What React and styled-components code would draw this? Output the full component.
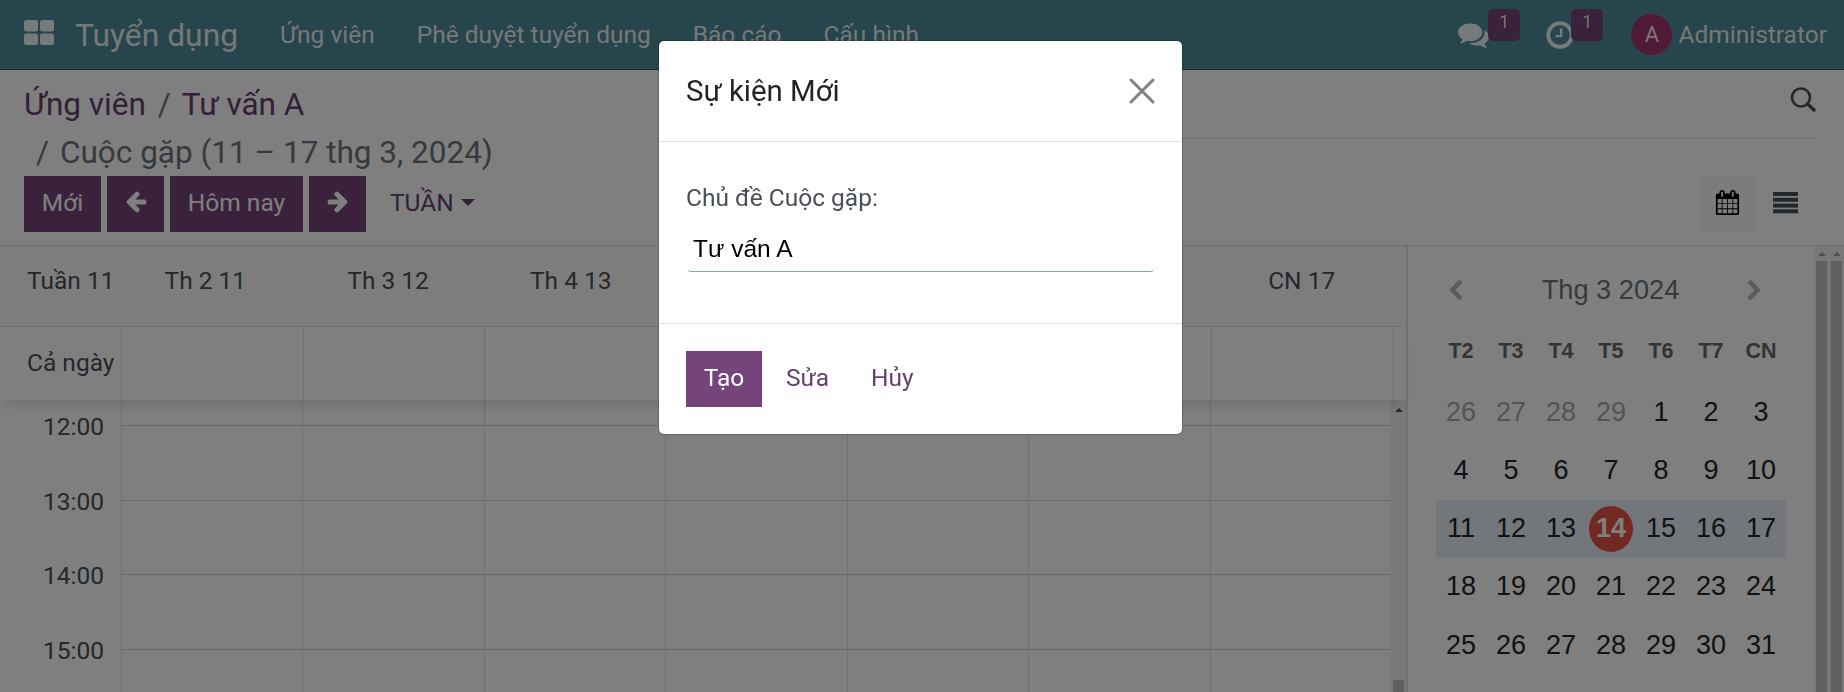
import styled, { createGlobalStyle, css } from 'styled-components';

const COLORS = {
  Navbar: '#4f8a9a',
  NavbarBorder: '#33555e',
  Primary: '#75447b',
  PrimaryDark: '#66406d',
  Muted: '#6c757d',
  Text: '#495057',
  Border: '#dee2e6',
  Today: '#e55345',
  WeekHighlight: '#e6eef9',
};

const WEEK_DAYS = ['Th 2 11', 'Th 3 12', 'Th 4 13', 'Th 5 14', 'Th 6 15', 'Th 7 16', 'CN 17'];
const HOURS = ['12:00', '13:00', '14:00', '15:00'];
const MONTH_DAYS = ['T2', 'T3', 'T4', 'T5', 'T6', 'T7', 'CN'];
const MONTH = [
  [26, 27, 28, 29, 1, 2, 3],
  [4, 5, 6, 7, 8, 9, 10],
  [11, 12, 13, 14, 15, 16, 17],
  [18, 19, 20, 21, 22, 23, 24],
  [25, 26, 27, 28, 29, 30, 31],
];

function AppsIcon() {
  return (
    <svg width="30" height="25" viewBox="0 0 30 25" fill="currentColor">
      <rect width="14" height="11.5" rx="2.5" />
      <rect x="16" width="14" height="11.5" rx="2.5" />
      <rect y="13.5" width="14" height="11.5" rx="2.5" />
      <rect x="16" y="13.5" width="14" height="11.5" rx="2.5" />
    </svg>
  );
}

function CommentsIcon() {
  return (
    <svg width="31" height="31" viewBox="0 0 1792 1792" fill="currentColor">
      <path d="M1408 768q0 139-94 257t-256.5 186.5-353.5 68.5q-86 0-176-16-124 88-278 128-36 9-86 16h-3q-11 0-20.5-8t-11.5-21q-1-3-1-6.5t.5-6.5 2-6l2.5-5 3.5-5.5 4-5 4.5-5 4-4.5q5-6 23-25t26-29.5 22.5-29 25-38.5 20.5-44q-124-72-195-177t-71-224q0-139 94-257t256.5-186.5 353.5-68.5 353.5 68.5 256.5 186.5 94 257zm384 256q0 120-71 224.5t-195 176.5q10 24 20.5 44t25 38.5 22.5 29 26 29.5 23 25q1 1 4 4.5t4.5 5 4 5 3.5 5.5l2.5 5 2 6 .5 6.5-1 6.5q-3 14-13 22t-22 7q-50-7-86-16-154-40-278-128-90 16-176 16-271 0-472-132 58 4 88 4 161 0 309-45t264-129q125-92 192-212t67-254q0-77-23-152 129 71 204 178t75 230z" />
    </svg>
  );
}

function ClockIcon() {
  return (
    <svg width="32" height="32" viewBox="0 0 1792 1792" fill="currentColor">
      <path d="M1024 544v448q0 14-9 23t-23 9h-320q-14 0-23-9t-9-23v-64q0-14 9-23t23-9h224v-352q0-14 9-23t23-9h64q14 0 23 9t9 23zm416 352q0-148-73-273t-198-198-273-73-273 73-198 198-73 273 73 273 198 198 273 73 273-73 198-198 73-273zm224 0q0 209-103 385.5t-279.5 279.5-385.5 103-385.5-103-279.5-279.5-103-385.5 103-385.5 279.5-279.5 385.5-103 385.5 103 279.5 279.5 103 385.5z" />
    </svg>
  );
}

function ArrowIcon({ flip }) {
  return (
    <svg width="24" height="24" viewBox="0 0 1792 1792" fill="currentColor">
      <path
        transform={flip ? 'translate(1792 -64) scale(-1 1)' : 'translate(0 -64)'}
        d="M1664 896v128q0 53-32.5 90.5t-84.5 37.5h-704l293 294q38 36 38 90t-38 90l-75 76q-37 37-90 37-52 0-91-37l-651-652q-37-37-37-90 0-52 37-91l651-650q38-38 91-38 52 0 90 38l75 74q38 38 38 91t-38 91l-293 293h704q52 0 84.5 37.5t32.5 90.5z"
      />
    </svg>
  );
}

function SearchIcon() {
  return (
    <svg width="26" height="26" viewBox="0 0 26 26" fill="none" stroke="currentColor">
      <circle cx="11" cy="10.5" r="9" strokeWidth="2.6" />
      <path d="M17.5 17l6.5 6" strokeWidth="3.4" strokeLinecap="round" />
    </svg>
  );
}

function CalendarIcon() {
  return (
    <svg width="25" height="25" viewBox="0 0 1792 1792" fill="currentColor">
      <path d="M192 1664h288v-288h-288v288zm352 0h320v-288h-320v288zm-352-352h288v-320h-288v320zm352 0h320v-320h-320v320zm-352-384h288v-288h-288v288zm736 736h320v-288h-320v288zm-384-736h320v-288h-320v288zm768 736h288v-288h-288v288zm-384-352h320v-320h-320v320zm-352-864v-288q0-13-9.5-22.5t-22.5-9.5h-64q-13 0-22.5 9.5t-9.5 22.5v288q0 13 9.5 22.5t22.5 9.5h64q13 0 22.5-9.5t9.5-22.5zm736 864h288v-320h-288v320zm-384-384h320v-288h-320v288zm384 0h288v-288h-288v288zm32-480v-288q0-13-9.5-22.5t-22.5-9.5h-64q-13 0-22.5 9.5t-9.5 22.5v288q0 13 9.5 22.5t22.5 9.5h64q13 0 22.5-9.5t9.5-22.5zm384-64v1280q0 52-38 90t-90 38h-1408q-52 0-90-38t-38-90v-1280q0-52 38-90t90-38h128v-96q0-66 47-113t113-47h64q66 0 113 47t47 113v96h384v-96q0-66 47-113t113-47h64q66 0 113 47t47 113v96h128q52 0 90 38t38 90z" />
    </svg>
  );
}

function ListIcon() {
  return (
    <svg width="25" height="22" viewBox="0 0 25 22" fill="currentColor">
      <rect width="25" height="4" y="0" />
      <rect width="25" height="4" y="5.8" />
      <rect width="25" height="4" y="11.6" />
      <rect width="25" height="4" y="17.3" />
    </svg>
  );
}

function ChevronIcon({ flip }) {
  return (
    <svg width="14" height="22" viewBox="0 0 14 22" fill="none" stroke="currentColor" strokeWidth="4.6">
      <path d={flip ? 'M2 2l8.5 9L2 20' : 'M12 2L3.5 11 12 20'} />
    </svg>
  );
}

function CloseIcon() {
  return (
    <svg width="26" height="26" viewBox="0 0 26 26" stroke="currentColor" strokeWidth="3" strokeLinecap="round">
      <path d="M2 2l22 22M24 2L2 24" />
    </svg>
  );
}

function Navbar() {
  return (
    <NavbarWrapper>
      <AppsIcon />
      <Brand>Tuyển dụng</Brand>
      <Menu>
        <span>Ứng viên</span>
        <span>Phê duyệt tuyển dụng</span>
        <span>Báo cáo</span>
        <span>Cấu hình</span>
      </Menu>
      <Systray>
        <SystrayItem $width={86}>
          <CommentsIcon />
          <Badge $left={30}>1</Badge>
        </SystrayItem>
        <SystrayItem $width={87}>
          <ClockIcon />
          <Badge $left={27}>1</Badge>
        </SystrayItem>
        <Avatar>A</Avatar>
        Administrator
      </Systray>
    </NavbarWrapper>
  );
}

function ControlPanel() {
  return (
    <ControlWrapper>
      <ControlLeft>
        <Breadcrumb>
          <div>
            <a>Ứng viên</a>
            <Slash>/</Slash>
            <a>Tư vấn A</a>
          </div>
          <CurrentCrumb>
            <Slash>/</Slash>
            Cuộc gặp (11 – 17 thg 3, 2024)
          </CurrentCrumb>
        </Breadcrumb>
        <ButtonRow>
          <Button $width={77}>Mới</Button>
          <Button $width={57}>
            <ArrowIcon />
          </Button>
          <Button $width={133}>Hôm nay</Button>
          <Button $width={57}>
            <ArrowIcon flip />
          </Button>
          <ScaleButton>
            TUẦN
            <Caret />
          </ScaleButton>
        </ButtonRow>
      </ControlLeft>
      <ControlRight>
        <SearchRow>
          <SearchIcon />
        </SearchRow>
        <ViewSwitcher>
          <ViewButton $active>
            <CalendarIcon />
          </ViewButton>
          <ViewButton>
            <ListIcon />
          </ViewButton>
        </ViewSwitcher>
      </ControlRight>
    </ControlWrapper>
  );
}

function WeekCalendar() {
  return (
    <Week>
      <WeekHeader>
        <WeekNumber>Tuần 11</WeekNumber>
        {WEEK_DAYS.map((day) => (
          <DayName key={day}>{day}</DayName>
        ))}
      </WeekHeader>
      <AllDayRow>
        <AllDayLabel>Cả ngày</AllDayLabel>
        {WEEK_DAYS.map((day) => (
          <AllDayCell key={day} />
        ))}
      </AllDayRow>
      <Scroller>
        <Slots>
          <SlotRow $short>
            <HourLabel />
            {WEEK_DAYS.map((day) => (
              <SlotCell key={day} />
            ))}
          </SlotRow>
          {HOURS.map((hour) => (
            <SlotRow key={hour}>
              <HourLabel>{hour}</HourLabel>
              {WEEK_DAYS.map((day) => (
                <SlotCell key={day} $line />
              ))}
            </SlotRow>
          ))}
        </Slots>
        <Scrollbar $inner>
          <ScrollArrow $dark />
          <ScrollThumb $gap={268} />
        </Scrollbar>
      </Scroller>
    </Week>
  );
}

function MonthPicker() {
  return (
    <Sidebar>
      <MonthHeader>
        <ChevronIcon />
        <span>Thg 3 2024</span>
        <ChevronIcon flip />
      </MonthHeader>
      <MonthRow $head>
        {MONTH_DAYS.map((day) => (
          <div key={day}>{day}</div>
        ))}
      </MonthRow>
      {MONTH.map((week, row) => (
        <MonthRow key={row} $current={row === 2}>
          {week.map((day) => (
            <MonthDay key={day} $outside={row === 0 && day > 7}>
              {day === 14 ? <Today>{day}</Today> : day}
            </MonthDay>
          ))}
        </MonthRow>
      ))}
    </Sidebar>
  );
}

function EventDialog() {
  return (
    <Backdrop>
      <Dialog role="dialog" aria-label="Sự kiện Mới">
        <DialogHeader>
          <DialogTitle>Sự kiện Mới</DialogTitle>
          <CloseIcon />
        </DialogHeader>
        <DialogBody>
          <label htmlFor="title">Chủ đề Cuộc gặp:</label>
          <TitleInput id="title" defaultValue="Tư vấn A" spellCheck={false} />
        </DialogBody>
        <DialogFooter>
          <Button $width={76}>Tạo</Button>
          <LinkButton>Sửa</LinkButton>
          <LinkButton>Hủy</LinkButton>
        </DialogFooter>
      </Dialog>
    </Backdrop>
  );
}

function App() {
  return (
    <Page>
      <GlobalStyle />
      <Navbar />
      <ControlPanel />
      <Content>
        <WeekCalendar />
        <MonthPicker />
        <Scrollbar>
          <ScrollArrow />
          <ScrollThumb />
        </Scrollbar>
        <Scrollbar>
          <ScrollArrow />
          <ScrollThumb />
        </Scrollbar>
      </Content>
      <EventDialog />
    </Page>
  );
}

const GlobalStyle = createGlobalStyle`
  *, *::before, *::after {
    box-sizing: border-box;
  }

  body {
    margin: 0;
    font-family: Roboto, 'Liberation Sans', sans-serif;
    font-size: 24.5px;
    color: ${COLORS.Text};
  }

  svg {
    display: block;
    flex-shrink: 0;
  }
`;

const Page = styled.div`
  display: flex;
  flex-direction: column;
  height: 692px;
  overflow: hidden;
  background: white;
`;

const NavbarWrapper = styled.header`
  display: flex;
  align-items: center;
  flex-shrink: 0;
  height: 70px;
  padding: 0 17px 4px 24px;
  color: rgba(255, 255, 255, 0.9);
  background: ${COLORS.Navbar};
  border-bottom: 1px solid ${COLORS.NavbarBorder};
`;

const Brand = styled.div`
  width: 205px;
  padding: 4px 0 0 21px;
  font-size: 31.8px;
  line-height: 48px;
`;

const Menu = styled.nav`
  display: flex;
  gap: 42px;
  padding: 4px 0 0 21px;
`;

const Systray = styled.div`
  display: flex;
  align-items: center;
  margin-left: auto;
  padding-top: 4px;
`;

const SystrayItem = styled.div`
  position: relative;
  width: ${(props) => props.$width}px;
`;

const Badge = styled.span`
  position: absolute;
  top: -10px;
  left: ${(props) => props.$left}px;
  width: 32px;
  height: 32px;
  font-size: 18px;
  line-height: 25px;
  text-align: center;
  text-shadow: 1px 1px 0 rgba(0, 0, 0, 0.3);
  background: ${COLORS.Primary};
  border-radius: 5px;
`;

const Avatar = styled.div`
  width: 41px;
  height: 41px;
  margin-right: 6px;
  font-size: 22px;
  line-height: 42px;
  text-align: center;
  background: #a2376f;
  border-radius: 50%;
`;

const ControlWrapper = styled.div`
  display: flex;
  flex-shrink: 0;
  height: 176px;
  padding: 11px 28px 0 24px;
  border-bottom: 1px solid ${COLORS.Border};
`;

const ControlLeft = styled.div`
  width: 882px;
`;

const Breadcrumb = styled.div`
  height: 95px;
  font-size: 31.5px;
  line-height: 48px;
  color: ${COLORS.PrimaryDark};
`;

const CurrentCrumb = styled.div`
  color: ${COLORS.Muted};
`;

const Slash = styled.span`
  padding: 0 11px 0 12px;
  color: ${COLORS.Muted};
`;

const ButtonRow = styled.div`
  display: flex;
  gap: 6px;
`;

const Button = styled.button`
  display: flex;
  align-items: center;
  justify-content: center;
  width: ${(props) => props.$width}px;
  height: 56px;
  padding: 0 0 4px;
  font: inherit;
  color: white;
  background: ${COLORS.Primary};
  border: none;
`;

const ScaleButton = styled(Button)`
  gap: 7px;
  padding-left: 18px;
  color: ${COLORS.PrimaryDark};
  background: none;
`;

const Caret = styled.span`
  border: 7px solid transparent;
  border-top-color: currentColor;
  border-bottom: none;
`;

const ControlRight = styled.div`
  display: flex;
  flex: 1;
  flex-direction: column;
`;

const SearchRow = styled.div`
  display: flex;
  justify-content: flex-end;
  height: 58px;
  padding-top: 6px;
  border-bottom: 1px solid ${COLORS.Border};
`;

const ViewSwitcher = styled.div`
  display: flex;
  justify-content: flex-end;
  padding-top: 37px;
`;

const ViewButton = styled.div`
  display: flex;
  align-items: center;
  justify-content: center;
  width: 59px;
  height: 56px;
  padding: 0 2px 3px 0;

  ${(props) =>
    props.$active &&
    css`
      padding-right: 1px;
      color: black;
      background: #f8f9fa;
    `}
`;

const Content = styled.main`
  display: flex;
  flex: 1;
  min-height: 0;
`;

const Week = styled.section`
  display: flex;
  flex-direction: column;
  width: 1408px;
  border-right: 2px solid ${COLORS.Border};
`;

const WeekHeader = styled.div`
  display: flex;
  flex-shrink: 0;
  height: 81px;
  padding-right: 13px;
  line-height: 70px;
  white-space: nowrap;
  color: ${COLORS.Text};
  background: #fbfbfc;
  border-bottom: 1px solid ${COLORS.Border};
`;

const WeekNumber = styled.div`
  flex-shrink: 0;
  width: 114px;
  padding-left: 27px;
`;

const DayName = styled.div`
  flex: 1;
  text-align: center;
`;

const AllDayRow = styled.div`
  display: flex;
  flex-shrink: 0;
  z-index: 1;
  height: 73px;
  padding-right: 12px;
  line-height: 72px;
  background: white;
  box-shadow: 0 10px 14px -6px rgba(0, 0, 0, 0.15);
`;

const AllDayLabel = styled.div`
  width: 122px;
  padding-left: 27px;
  white-space: nowrap;
  border-right: 1px solid ${COLORS.Border};
`;

const AllDayCell = styled.div`
  flex: 1;
  border-right: 1px solid ${COLORS.Border};
`;

const Scroller = styled.div`
  display: flex;
  flex: 1;
  min-height: 0;
`;

const Slots = styled.div`
  flex: 1;
  overflow: hidden;
`;

const SlotRow = styled.div`
  display: flex;
  height: ${(props) => (props.$short ? 25 : 74.6)}px;
`;

const HourLabel = styled.div`
  width: 122px;
  padding-right: 17px;
  line-height: 4px;
  text-align: right;
  border-right: 1px solid ${COLORS.Border};
`;

const SlotCell = styled.div`
  flex: 1;
  border-top: ${(props) => (props.$line ? `1px solid #d3d6d9` : 'none')};

  & + & {
    border-left: 1px solid ${COLORS.Border};
  }
`;

const Scrollbar = styled.div`
  display: flex;
  flex-direction: column;
  align-items: center;
  width: 15px;
  padding-top: ${(props) => (props.$inner ? 8 : 6)}px;
  background: #f1f1f1;
`;

const ScrollArrow = styled.span`
  border: 4px solid transparent;
  border-top: none;
  border-bottom-color: ${(props) => (props.$dark ? '#505050' : '#a3a3a3')};
`;

const ScrollThumb = styled.span`
  flex: 1;
  width: 11px;
  margin-top: ${(props) => props.$gap ?? 5}px;
  background: #c1c1c1;
`;

const Sidebar = styled.aside`
  flex: 1;
  padding: 17px 28px 0;
  font-family: 'Liberation Sans', sans-serif;
`;

const MonthHeader = styled.div`
  display: flex;
  align-items: center;
  justify-content: space-between;
  height: 54px;
  padding: 0 25px 0 13px;
  font-size: 27.2px;
  color: ${COLORS.Muted};

  span {
    margin-left: 11px;
  }

  svg {
    opacity: 0.5;
  }
`;

const MonthRow = styled.div`
  display: grid;
  grid-template-columns: repeat(7, 50px);
  align-items: center;
  width: 350px;
  height: 58.2px;
  font-size: 27px;
  text-align: center;
  color: #212529;
  background: ${(props) => (props.$current ? COLORS.WeekHighlight : 'none')};

  ${(props) =>
    props.$head &&
    css`
      height: 66.3px;
      padding-top: 2px;
      font-size: 21.5px;
      font-weight: bold;
      color: #666;
    `}
`;

const MonthDay = styled.div`
  color: ${(props) => (props.$outside ? '#a9a9a9' : 'inherit')};
`;

const Today = styled.span`
  display: block;
  width: 44px;
  height: 46px;
  margin: 0 auto;
  font-weight: bold;
  line-height: 44px;
  color: white;
  background: ${COLORS.Today};
  border-radius: 50%;
`;

const Backdrop = styled.div`
  position: fixed;
  inset: 0;
  z-index: 10;
  padding: 41px 662px 0 659px;
  background: rgba(0, 0, 0, 0.5);
`;

const Dialog = styled.div`
  height: 393px;
  background: white;
  border-radius: 5px;
  box-shadow: 0 0 0 1px rgba(0, 0, 0, 0.2);
`;

const DialogHeader = styled.div`
  display: flex;
  align-items: center;
  justify-content: space-between;
  height: 101px;
  padding: 0 27px 1px;
  color: #808080;
  border-bottom: 1px solid ${COLORS.Border};
`;

const DialogTitle = styled.h4`
  margin: 0;
  font-size: 29.4px;
  font-weight: 400;
  color: #212529;
`;

const DialogBody = styled.div`
  height: 181px;
  padding: 38px 27px 0;
  line-height: 36px;
`;

const TitleInput = styled.input`
  display: block;
  width: 100%;
  height: 43px;
  margin-top: 13px;
  padding: 0 6px 4px;
  font-family: 'Liberation Sans', sans-serif;
  font-size: 24.5px;
  color: black;
  background: none;
  border: 1px solid transparent;
  border-bottom-color: #76acb8;
  border-radius: 5px;
  outline: none;
`;

const DialogFooter = styled.div`
  display: flex;
  padding: 27px;
  border-top: 1px solid ${COLORS.Border};
`;

const LinkButton = styled(Button)`
  padding: 0 18px 4px;
  margin-left: 6px;
  color: ${COLORS.PrimaryDark};
  background: none;
`;

export default App;
